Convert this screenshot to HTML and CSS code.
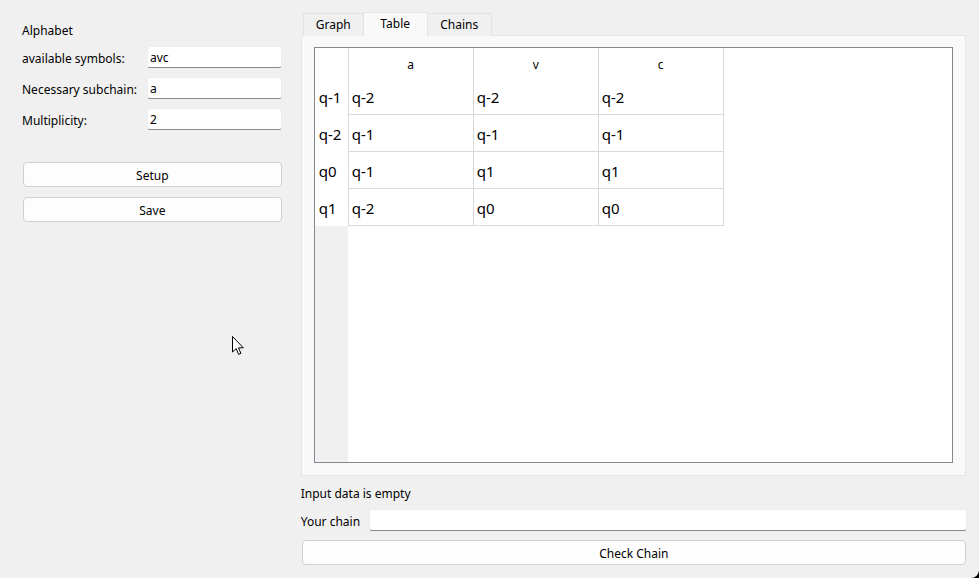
FILE: index.html
```html
<!DOCTYPE html>
<html>
<head>
<meta charset="utf-8">
<link rel="stylesheet" href="styles.css">
</head>
<body>
<div class="app">
  <div class="left">
    <div class="title">Alphabet</div>
    <div class="form">
      <div class="frow"><span class="flabel">available symbols:</span><div class="input">avc</div></div>
      <div class="frow"><span class="flabel">Necessary subchain:</span><div class="input">a</div></div>
      <div class="frow"><span class="flabel">Multiplicity:</span><div class="input">2</div></div>
    </div>
    <div class="btn btn-setup">Setup</div>
    <div class="btn btn-save">Save</div>
  </div>
  <div class="right">
    <div class="tabs">
      <div class="tab tab-graph">Graph</div>
      <div class="tab tab-table active">Table</div>
      <div class="tab tab-chains">Chains</div>
    </div>
    <div class="pane">
      <div class="tableview">
        <div class="hrow">
          <div class="corner"></div>
          <div class="hcell">a</div>
          <div class="hcell">v</div>
          <div class="hcell">c</div>
        </div>
        <div class="row"><div class="vh">q-1</div><div class="cell">q-2</div><div class="cell">q-2</div><div class="cell">q-2</div></div>
        <div class="row"><div class="vh">q-2</div><div class="cell">q-1</div><div class="cell">q-1</div><div class="cell">q-1</div></div>
        <div class="row"><div class="vh">q0</div><div class="cell">q-1</div><div class="cell">q1</div><div class="cell">q1</div></div>
        <div class="row"><div class="vh">q1</div><div class="cell">q-2</div><div class="cell">q0</div><div class="cell">q0</div></div>
        <div class="filler"><div class="filler-side"></div></div>
      </div>
    </div>
    <div class="status">Input data is empty</div>
    <div class="chainrow"><span class="chainlabel">Your chain</span><div class="input chaininput"></div></div>
    <div class="btn btn-check">Check Chain</div>
  </div>
  <svg class="cursor" width="13" height="20" viewBox="0 0 13 20">
    <path d="M0.5 0.5 L0.5 16 L4.2 12.6 L6.6 18.4 L8.9 17.4 L6.5 11.8 L11.3 11.8 Z" fill="#fff" stroke="#000" stroke-width="1" stroke-linejoin="miter"/>
  </svg>
</div>
</body>
</html>
```

FILE: styles.css
```css
html, body {
  margin: 0;
  padding: 0;
  background: #000;
}
* { box-sizing: border-box; }

.app {
  position: relative;
  width: 979px;
  height: 578px;
  background: #f0f0f0;
  border-bottom-right-radius: 8px;
  display: flex;
  gap: 19px;
  padding: 0 13px 0 22px;
  font-family: "Noto Sans", "Open Sans", sans-serif;
  font-size: 12px;
  color: #000;
}

.left {
  width: 260px;
  padding-top: 22px;
  display: flex;
  flex-direction: column;
}
.title {
  height: 16px;
  line-height: 18px;
}
.form {
  margin-top: 8px;
  display: flex;
  flex-direction: column;
  gap: 9px;
}
.frow {
  display: flex;
  align-items: center;
  height: 22px;
}
.flabel {
  width: 125px;
  white-space: nowrap;
  padding-top: 2px;
}
.input {
  flex: 1;
  height: 22px;
  background: #fff;
  border: 1px solid #ececec;
  border-bottom: 1px solid #8a8a8a;
  border-radius: 3px;
  padding: 0 2px;
  line-height: 22px;
}

.btn {
  height: 25px;
  background: #fdfdfd;
  border: 1px solid #d0d0d0;
  border-radius: 4px;
  text-align: center;
  line-height: 25px;
  margin-left: 1px;
}
.btn-setup { margin-top: 32px; }
.btn-save { margin-top: 10px; }

.right {
  width: 666px;
  padding-top: 12px;
  display: flex;
  flex-direction: column;
}
.tabs {
  display: flex;
  align-items: flex-end;
  padding-left: 2px;
  height: 24px;
  position: relative;
  z-index: 1;
  margin-bottom: -1px;
}
.tab {
  height: 23px;
  border: 1px solid #e3e3e3;
  border-bottom: none;
  background: #f0f0f0;
  text-align: center;
  line-height: 21px;
}
.tab-graph { width: 61px; }
.tab-table { width: 65px; }
.tab-chains { width: 65px; margin-left: -1px; }
.tab.active {
  height: 24px;
  background: #f9f9f9;
  margin-left: -1px;
  line-height: 21px;
}

.pane {
  height: 441px;
  background: #f9f9f9;
  border: 1px solid #e5e5e5;
  padding: 11px 12px 12px 12px;
  display: flex;
}
.tableview {
  flex: 1;
  background: #fff;
  border: 1px solid #828790;
  display: flex;
  flex-direction: column;
  overflow: hidden;
}
.hrow {
  display: flex;
  height: 30px;
}
.corner {
  width: 34px;
  border-right: 1px solid #d9d9d9;
}
.hcell {
  width: 125px;
  border-right: 1px solid #d9d9d9;
  text-align: center;
  line-height: 34px;
}
.row {
  display: flex;
  height: 37px;
  font-size: 15px;
}
.vh {
  width: 34px;
  border-right: 1px solid #d9d9d9;
  padding-left: 4px;
  line-height: 38px;
}
.cell {
  width: 125px;
  border-right: 1px solid #d9d9d9;
  border-bottom: 1px solid #d9d9d9;
  padding-left: 3px;
  line-height: 38px;
}
.filler {
  flex: 1;
  display: flex;
}
.filler-side {
  width: 33px;
  background: #f0f0f0;
}

.status {
  margin-top: 9px;
  height: 16px;
  line-height: 18px;
}
.chainrow {
  margin-top: 8px;
  display: flex;
  align-items: center;
  height: 22px;
}
.chainlabel {
  width: 68px;
  white-space: nowrap;
  padding-top: 2px;
}
.chaininput { margin-right: -1px; }
.btn-check { margin-top: 9px; }

.cursor {
  position: absolute;
  left: 232px;
  top: 336px;
}
```
